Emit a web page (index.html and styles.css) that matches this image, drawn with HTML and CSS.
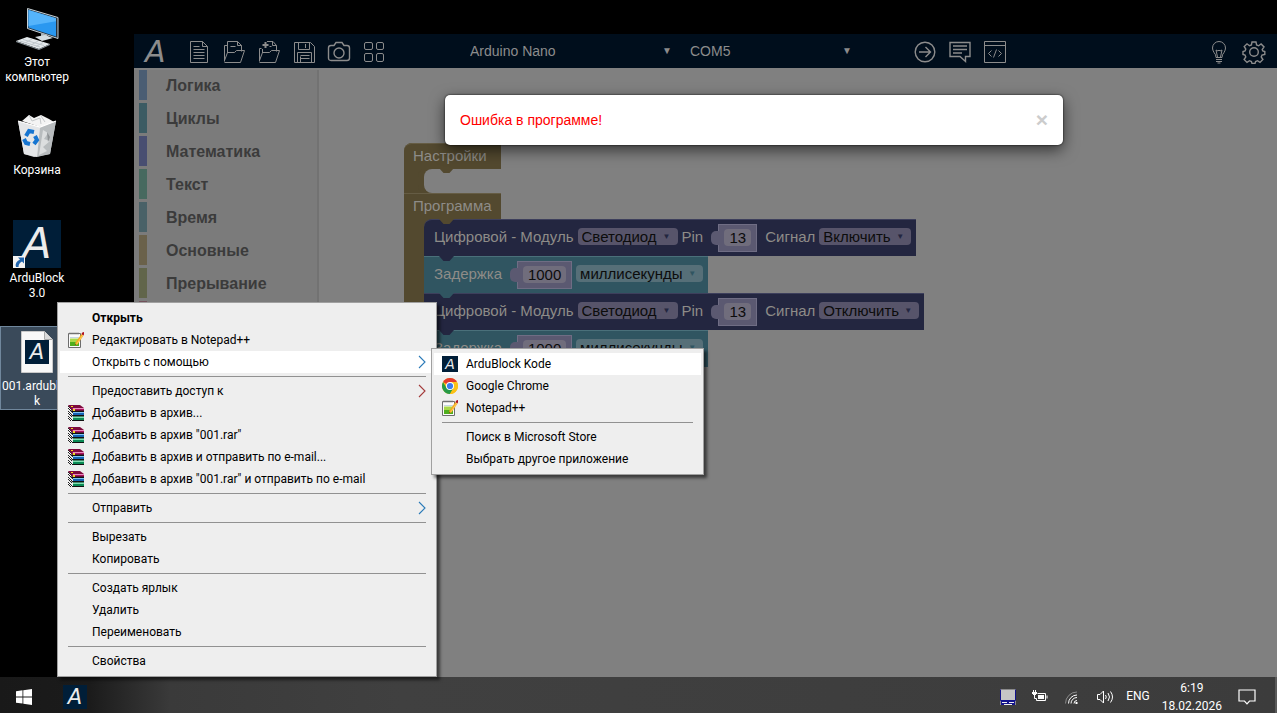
FILE: index.html
```html
<!DOCTYPE html>
<html lang="ru">
<head>
<meta charset="utf-8">
<title>ArduBlock 3.0</title>
<link rel="stylesheet" href="styles.css">
</head>
<body>
<svg class="defs" aria-hidden="true">
  <symbol id="rar" viewBox="0 0 16 16">
    <path d="M0 1l4 4v2L0 3zM0 6l4 4v2L0 8zM0 11l4 4v1H3l-3-3z" fill="#fff"/>
    <path d="M0 1l4 4M0 3l4 4M0 6l4 4M0 8l4 4M0 11l4 4M0 13l3 3" stroke="#222" stroke-width="1" fill="none"/>
    <path d="M0 0h12l4 3v2.500H4z" fill="#7d0a3c"/><path d="M4 3h12v3H5z" fill="#a8115c"/><path d="M5 3.500h11" stroke="#e98abf"/>
    <path d="M2 5.500L4.500 8H16V5.500z" fill="#111"/><path d="M5 7h11v3H5z" fill="#1464b4"/><path d="M5 7.500h11" stroke="#7fc4f5"/>
    <path d="M3 10l2 1.500h11V10z" fill="#111"/><path d="M5 11.500h11V15H5z" fill="#0a8a55"/><path d="M5 12.500h11" stroke="#7ee0b0"/>
    <path d="M4 15.500h12" stroke="#111"/><path d="M3 1h2v1H3zM5 4h2v2H5z" fill="#f2d81c"/>
  </symbol>
  <symbol id="npp" viewBox="0 0 16 16">
    <path d="M.5 1.500h12v14H.5z" fill="#fbfbfb" stroke="#6d6d6d"/>
    <path d="M2 6.500h9V14H2z" fill="#a9d94a"/><path d="M2 10h9v4H2z" fill="#4fae1d"/><path d="M2 5.500h9" stroke="#c6d5e2"/>
    <path d="M2 .5v2M4 .5v2M6 .5v2M8 .5v2M10 .5v2" stroke="#777"/>
    <path d="M13.500 2l2 1.500-6 9-2.500 1 .5-3z" fill="#f5a81c"/><path d="M13.500 2l1.300 1-6 9" stroke="#ffe07a" fill="none" stroke-width=".7"/>
    <path d="M13.500 2l.8-1.500L16 0v2.500l-.8 1z" fill="#b1121e"/><path d="M7 13.500l.4-1.500 1 .8z" fill="#333"/>
  </symbol>
  <symbol id="chrome" viewBox="0 0 16 16">
    <circle cx="8" cy="8" r="8" fill="#fbc116"/>
    <path d="M8 8L1.070 4A8 8 0 0 1 14.930 4z" fill="#e33b2e"/>
    <path d="M1.070 4A8 8 0 0 0 8 16l3.500-6L8 8 4.500 10z" fill="#269a48"/>
    <path d="M8 4h6.930A8 8 0 0 1 8 16l3.500-6z" fill="#fbc116"/>
    <circle cx="8" cy="8" r="4" fill="#fff"/><circle cx="8" cy="8" r="3.100" fill="#3b7ded"/>
  </symbol>
  <symbol id="chev" viewBox="0 0 8 14"><path d="M1 1l6 6-6 6" fill="none" stroke="currentColor" stroke-width="1.100"/></symbol>
</svg>

<main class="desktop">
  <nav class="shortcuts" aria-label="Рабочий стол">
    <button class="shortcut">
      <svg class="pic" viewBox="0 0 48 48" aria-hidden="true">
        <path d="M14.500 4.500L45 13.500v21l-30.500-10z" fill="#26323c" stroke="#c6d0d6" stroke-width="1"/>
        <path d="M15.500 6L43 14.300v18.200L15.500 23.500z" fill="#2a98f0"/><path d="M15.500 6L43 14.300v3L15.500 22z" fill="#55b4fb"/>
        <path d="M28 29l6 2v4l-6-2z" fill="#a8b2b8"/><path d="M22 33l10-2 8 3-11 3z" fill="#d5dde1"/>
        <path d="M3 37l11-4 23 7-11 5z" fill="#e4e9ec"/><path d="M7 37l20 6M10 35.500l21 6M12 39l7-4M18 41l7-4M23 42.500l7-4" stroke="#c0c8cd" fill="none"/>
        <path d="M3 37l23 8 11-5v1l-11 5-23-8z" fill="#8d979d"/>
      </svg>
      <span>Этот<br>компьютер</span>
    </button>
    <button class="shortcut">
      <svg class="pic" viewBox="0 0 48 48" aria-hidden="true">
        <path d="M5 9l22 6 16-6-6 33-16 3-10-3z" fill="#c9ccce"/><path d="M27 15l16-6-6 33-13 3z" fill="#b8bcbe"/>
        <path d="M5 9l22 6-3 30-13-3z" fill="#e4e6e8"/>
        <path d="M9 9l7-6 5 3 7-3 8 4 5 3-14 5z" fill="#f4f4f4"/><path d="M16 3l3 6 8-3 1 6M28 4l4 6" stroke="#c5c8ca" fill="none"/>
        <path d="M30 18l5 3-4 6 6 2-7 6 4 4-8 4z" fill="#dcdedf"/><path d="M34 20l3 5-2 5z" fill="#8d9194"/>
        <path d="M5 9l22 6 16-6" stroke="#fff" fill="none" stroke-width="1.200"/>
        <g fill="none" stroke="#1675d1" stroke-width="4"><path d="M13 24l3-5 5 1"/><path d="M22 24l2 4-3 4"/><path d="M17 32l-4-1-2-4"/></g>
      </svg>
      <span>Корзина</span>
    </button>
    <button class="shortcut">
      <span class="tile tile-lg">A
        <svg class="link-mark" viewBox="0 0 12 12" aria-hidden="true"><path d="M0 0h12v12H0z" fill="#f3f3f3"/><path d="M5 1.500h6v6L9 5.500Q5.500 7 5.500 11H3Q1.500 6 7 3.500z" fill="#2165ae"/></svg>
      </span>
      <span>ArduBlock<br>3.0</span>
    </button>
    <button class="shortcut selected">
      <span class="pic doc">
        <svg class="sheet" viewBox="0 0 32 42" aria-hidden="true"><path d="M.5.5h23l8 8v33H.5z" fill="#f8f8f8" stroke="#c9c9c9"/><path d="M23.500.5v8h8" fill="#dadada" stroke="#a8a8a8"/></svg>
        <span class="tile tile-md">A</span>
      </span>
      <span>001.ardubloc<br>k</span>
    </button>
  </nav>

  <section class="app">
    <header class="toolbar">
      <span class="logo">A</span>
      <div class="tools">
        <button class="tool" aria-label="Новый"><svg viewBox="0 0 24 24"><path d="M3.500 1.500h12l5 5v16h-17zM15.500 1.500v5h5M6.500 9.500h11M6.500 12.500h11M6.500 15.500h11M6.500 18.500h11M6.500 6.500h6"/></svg></button>
        <button class="tool" aria-label="Открыть"><svg viewBox="0 0 24 24"><path d="M2.500 21.500v-16h3M5.500 13V1.500h10l4 4v6M15.500 1.500v4h4M8.500 6.500h5M2.500 22.500h16l4-12h-8l-2 2h-7l-3 8"/></svg></button>
        <button class="tool" aria-label="Добавить"><svg viewBox="0 0 24 24"><path d="M2.500 21.500v-13h2M5.500 13V9M10 1.500h6l3.500 4v6M15.500 1.500v4h4M12.500 6.500h2M2.500 22.500h16l4-12h-8l-2 2h-7l-3 8"/><path d="M8.500 2v6M5.500 5h6" stroke-width="2"/></svg></button>
        <button class="tool" aria-label="Сохранить"><svg viewBox="0 0 24 24"><path d="M2.500 2.500h16l4 4v16h-20zM6.500 2.500v7h11v-7M13.500 4v4M5.500 22.500v-10h14v10M8.500 16.500v6M8.500 15.500h9M8.500 18.500h9"/></svg></button>
        <button class="tool" aria-label="Снимок"><svg viewBox="0 0 24 24" class="heavy"><path d="M1.500 8q0-2.500 2.500-2.500h3l2-3h6l2 3h3q2.500 0 2.500 2.500v10q0 2.500-2.500 2.500H4q-2.500 0-2.500-2.500z"/><circle cx="12" cy="13" r="5"/></svg></button>
        <button class="tool" aria-label="Блоки"><svg viewBox="0 0 24 24"><rect x="2.500" y="2.500" width="8" height="7" rx="1.500"/><rect x="14.500" y="2.500" width="7" height="7" rx="1.500"/><rect x="2.500" y="13.500" width="8" height="8" rx="1.500"/><rect x="14.500" y="13.500" width="7" height="8" rx="1.500"/></svg></button>
      </div>
      <div class="pickers">
        <label class="picker picker-board"><select aria-label="Плата"><option>Arduino Nano</option></select><span class="caret">▼</span></label>
        <label class="picker picker-port"><select aria-label="Порт"><option>COM5</option></select><span class="caret">▼</span></label>
      </div>
      <div class="tools">
        <button class="tool" aria-label="Загрузить"><svg viewBox="0 0 24 24" class="heavy"><circle cx="12" cy="12" r="9.800"/><path d="M6 12h11M12.500 7l5 5-5 5"/></svg></button>
        <button class="tool" aria-label="Монитор"><svg viewBox="0 0 24 24" class="heavy"><path d="M2 2.500h20v14h-4.500v5l-5.500-5H2zM5 6h14M5 9.500h14M5 13h9"/></svg></button>
        <button class="tool" aria-label="Код"><svg viewBox="0 0 24 24"><path d="M1.500 1.500h21v21h-21zM1.500 5.500h21M8.500 10.500l-3 3 3 3M15.500 10.500l3 3-3 3M13.500 9.500l-3 8"/></svg></button>
      </div>
      <div class="tools tools-end">
        <button class="tool" aria-label="Подсказка"><svg viewBox="0 0 24 24"><path d="M9 17.500q0-3-2-5Q5.500 10 5.500 8a6.500 6.500 0 0 1 13 0q0 2-1.500 4.500-2 2-2 5zM10.500 17L9 10l2 1 1-1 1 1 2-1-1.500 7M9 19.500h6M9 21.500h6M10.500 23h3"/></svg></button>
        <button class="tool" aria-label="Настройки"><svg viewBox="0 0 24 24" class="heavy"><circle cx="12" cy="12" r="4.300"/><path d="M10 2h4l.6 3 2 .8 2.500-1.800 2.900 2.900L20.200 9.500l.6 1.500 2 .5v3l-2.800.6-.8 1.900 1.700 2.500-2.900 2.900-2.500-1.700-1.900.8-.6 2h-3l-.6-2-1.900-.8-2.500 1.700-2.900-2.900 1.700-2.500-.8-1.900-2-.6v-3l2-.5.8-2L2.200 6.500 5 3.800l2.500 1.900L9.400 5z"/></svg></button>
      </div>
    </header>

    <div class="editor">
      <ul class="toolbox">
        <li class="cat c-logic">Логика</li>
        <li class="cat c-loops">Циклы</li>
        <li class="cat c-math">Математика</li>
        <li class="cat c-text">Текст</li>
        <li class="cat c-time">Время</li>
        <li class="cat c-main">Основные</li>
        <li class="cat c-int">Прерывание</li>
        <li class="cat c-more"></li>
      </ul>
      <div class="workspace">
        <div class="program">
          <div class="arm arm-top">Настройки</div>
          <div class="mouth"></div>
          <div class="arm">Программа</div>
          <div class="stack">
            <div class="block navy first">
              <span>Цифровой - Модуль</span>
              <label class="field"><select aria-label="Модуль"><option>Светодиод</option></select><span class="tick">▼</span></label>
              <span>Pin</span>
              <span class="value"><input class="n2" aria-label="Pin" value="13"></span>
              <span>Сигнал</span>
              <label class="field"><select aria-label="Сигнал"><option>Включить</option></select><span class="tick">▼</span></label>
            </div>
            <div class="block teal">
              <span>Задержка</span>
              <span class="value"><input class="n4" aria-label="Задержка" value="1000"></span>
              <label class="field"><select aria-label="Единицы"><option>миллисекунды</option></select><span class="tick">▼</span></label>
            </div>
            <div class="block navy">
              <span>Цифровой - Модуль</span>
              <label class="field"><select aria-label="Модуль"><option>Светодиод</option></select><span class="tick">▼</span></label>
              <span>Pin</span>
              <span class="value"><input class="n2" aria-label="Pin" value="13"></span>
              <span>Сигнал</span>
              <label class="field"><select aria-label="Сигнал"><option>Отключить</option></select><span class="tick">▼</span></label>
            </div>
            <div class="block teal">
              <span>Задержка</span>
              <span class="value"><input class="n4" aria-label="Задержка" value="1000"></span>
              <label class="field"><select aria-label="Единицы"><option>миллисекунды</option></select><span class="tick">▼</span></label>
            </div>
          </div>
        </div>
      </div>
    </div>

    <div class="alert" role="alertdialog" aria-label="Ошибка">
      <span>Ошибка в программе!</span>
      <button class="close" aria-label="Закрыть">×</button>
    </div>
  </section>

  <div class="menu menu-main" role="menu">
    <button class="item"><b>Открыть</b></button>
    <button class="item"><svg class="ico"><use href="#npp"/></svg>Редактировать в Notepad++</button>
    <button class="item active">Открыть с помощью<svg class="chev blue"><use href="#chev"/></svg></button>
    <hr>
    <button class="item">Предоставить доступ к<svg class="chev red"><use href="#chev"/></svg></button>
    <button class="item"><svg class="ico"><use href="#rar"/></svg>Добавить в архив...</button>
    <button class="item"><svg class="ico"><use href="#rar"/></svg>Добавить в архив "001.rar"</button>
    <button class="item"><svg class="ico"><use href="#rar"/></svg>Добавить в архив и отправить по e-mail...</button>
    <button class="item"><svg class="ico"><use href="#rar"/></svg>Добавить в архив "001.rar" и отправить по e-mail</button>
    <hr>
    <button class="item">Отправить<svg class="chev blue"><use href="#chev"/></svg></button>
    <hr>
    <button class="item">Вырезать</button>
    <button class="item">Копировать</button>
    <hr>
    <button class="item">Создать ярлык</button>
    <button class="item">Удалить</button>
    <button class="item">Переименовать</button>
    <hr>
    <button class="item">Свойства</button>
  </div>

  <div class="menu menu-sub" role="menu">
    <button class="item active"><span class="ico tile tile-sm">A</span>ArduBlock Kode</button>
    <button class="item"><svg class="ico"><use href="#chrome"/></svg>Google Chrome</button>
    <button class="item"><svg class="ico"><use href="#npp"/></svg>Notepad++</button>
    <hr>
    <button class="item">Поиск в Microsoft Store</button>
    <button class="item">Выбрать другое приложение</button>
  </div>
</main>

<footer class="taskbar">
  <button class="task" aria-label="Пуск"><svg width="16" height="16" viewBox="0 0 16 16" fill="#fff"><path d="M0 2.200L6.500 1.300v6.200H0zM7.300 1.200L16 0v7.500H7.300zM0 8.400h6.500v6.200L0 13.800zM7.300 8.400H16V16l-8.700-1.200z"/></svg></button>
  <button class="task" aria-label="ArduBlock"><span class="tile tile-md">A</span></button>
  <div class="tray">
    <svg width="16" height="16" viewBox="0 0 16 16" aria-hidden="true"><path d="M0 0h16v16H0z" fill="#8a8a8a"/><path d="M1 1h14v10H1z" fill="#c6c6c6"/><path d="M.5.500v11h15V.5" fill="none" stroke="#14148c"/><path d="M1 12h14v4H1z" fill="#14148c"/><path d="M2 13h5v1H2zM9 13h5v1H9zM4 15h8v1H4z" fill="#eee"/></svg>
    <svg width="16" height="16" viewBox="0 0 16 16" fill="none" stroke="#fff" aria-hidden="true"><path d="M5.500 4.500h8v7h-9v-2M15 6.500v3"/><path d="M6 6h6v4H6z" fill="#fff" stroke="none"/><path d="M1.500 1v2M3.500 1v2M2.500 5.500v4h2"/><path d="M0 3h5v2H4v1H1V5H0z" fill="#fff" stroke="none"/></svg>
    <svg width="16" height="16" viewBox="0 0 16 16" fill="none" stroke="#fff" aria-hidden="true"><path d="M10 14.500a3 3 0 0 1 3-3M7 14.500a6 6 0 0 1 6-6M4.500 14.500A8.500 8.500 0 0 1 13 6"/><path d="M1.500 14.500A11.500 11.500 0 0 1 13 3" opacity=".4"/><path d="M11.500 13h2v2h-2z" fill="#fff" stroke="none"/></svg>
    <svg width="18" height="16" viewBox="0 0 18 16" fill="none" stroke="#fff" aria-hidden="true"><path d="M1.500 5.500H4L7.500 2v12L4 10.500H1.500zM9.500 6q1.500 2 0 4M12 4q3 4 0 8M14.500 2.500q4 5.500 0 11"/></svg>
    <span class="lang">ENG</span>
    <time class="clock">6:19<br>18.02.2026</time>
    <svg width="18" height="16" viewBox="0 0 18 16" fill="none" stroke="#fff" stroke-width="1.200" aria-hidden="true"><path d="M1 1h16v11h-5.500L9 14.800 6.500 12H1z"/></svg>
  </div>
</footer>
</body>
</html>
```
FILE: styles.css
```css
* { box-sizing: border-box; }
body {
  margin: 0;
  min-height: 100vh;
  display: flex;
  flex-direction: column;
  background: #000;
  font: 12px/15px Roboto, "Noto Sans", sans-serif;
  color: #000;
}
button, select, input { font: inherit; color: inherit; border: 0; margin: 0; padding: 0; background: none; }
select { appearance: none; }
.defs { position: absolute; width: 0; height: 0; }

.desktop { position: relative; flex: 1; display: flex; }

/* Desktop shortcuts */
.shortcuts { width: 134px; flex: none; display: flex; flex-direction: column; gap: 24px; padding-top: 2px; }
.shortcut {
  width: 74px; height: 84px; flex: none;
  display: flex; flex-direction: column; align-items: center; gap: 3px; padding-top: 2px;
  color: #fff; text-align: center; white-space: nowrap;
}
.selected { background: #3a4a5a; outline: 1px solid #70879c; outline-offset: -1px; }
.pic { width: 48px; height: 48px; flex: none; }
.doc { display: grid; place-items: center; }
.sheet { width: 32px; height: 42px; grid-area: 1 / 1; }
.doc .tile { grid-area: 1 / 1; }

.tile {
  display: grid; place-items: center; flex: none;
  background: #001e38; color: #ececec;
  font-family: "DejaVu Sans", sans-serif; font-style: italic;
}
.tile-sm { font-size: 14px; line-height: 16px; }
.tile-md { width: 24px; height: 24px; font-size: 21px; line-height: 24px; }
.tile-lg { position: relative; width: 48px; height: 48px; font-size: 42px; line-height: 48px; }
.link-mark { position: absolute; left: 0; bottom: 0; width: 12px; height: 12px; }

/* Application */
.app { position: relative; flex: 1; margin-top: 34px; display: flex; flex-direction: column; background: #808080; font-family: "Liberation Sans", Arial, sans-serif; }
.toolbar { height: 34px; display: flex; align-items: center; background: #000e1c; color: #8c8c8c; }
.logo { width: 47px; padding: 2px 0 0 11px; font: italic 30px/34px "DejaVu Sans", sans-serif; }
.tools { display: flex; }
.tool { width: 35px; height: 34px; padding-top: 2px; display: grid; place-items: center; }
.tool svg { width: 24px; height: 24px; fill: none; stroke: #8c8c8c; stroke-width: 1; }
.tool svg.heavy { stroke-width: 1.4; }
.tools-end { margin-left: auto; padding-right: 6px; }
.pickers { display: flex; gap: 18px; padding: 0 55px 0 79px; }
.picker { display: grid; align-items: center; font-size: 14px; line-height: 20px; }
.picker select, .picker .caret { grid-area: 1 / 1; }
.picker-board { width: 202px; }
.picker-port { width: 162px; }
.caret { justify-self: end; font-size: 10px; pointer-events: none; }

.editor { flex: 1; display: flex; }
.toolbox {
  width: 185px; flex: none; margin: 2px 0 0; padding: 0 0 0 5px; list-style: none; overflow: hidden;
  background: #7b7b7b; border-right: 2px solid #727272;
}
.cat { height: 30px; margin-bottom: 3px; padding-left: 19px; border-left: 8px solid; font-weight: bold; font-size: 16px; line-height: 32px; color: #3b3b3b; }
.c-logic { border-left-color: #4a5d73; }
.c-loops { border-left-color: #3b5b63; }
.c-math { border-left-color: #484e71; }
.c-text { border-left-color: #47695f; }
.c-time { border-left-color: #496167; }
.c-main { border-left-color: #6a614a; }
.c-int { border-left-color: #61654a; }
.c-more { border-left-color: #73525c; }

.workspace { flex: 1; padding: 75px 0 0 85px; }
.program { width: max-content; padding-left: 20px; background: linear-gradient(#53492f, #53492f) left / 20px 100% no-repeat; border-radius: 8px 0 0; font-size: 15px; color: #8e8c88; }
.arm { width: 97px; height: 26px; margin-left: -20px; padding-left: 9px; line-height: 24px; background: #53492f; border-top: 1px solid #655c44; }
.arm-top { border-radius: 8px 0 0; }
.mouth { position: relative; width: 77px; height: 24px; border-radius: 8px 0 0 8px; background: #808080; box-shadow: -4px 0 0 2px #53492f; clip-path: inset(0 0 0 -6px); }
.mouth::before, .block::before {
  content: ""; position: absolute; left: 15px; top: -1px; width: 15px; height: 5px;
  clip-path: polygon(0 0, 100% 0, 70% 100%, 30% 100%); background: #53492f;
}
.stack { background: linear-gradient(#53492f, #53492f) left top / 8px 8px no-repeat; }
.block {
  position: relative; width: max-content; height: 37px;
  display: flex; align-items: center; gap: 4px; padding: 0 5px 4px 10px;
  --c: #232640; background: var(--c); border-top: 1px solid #3d3f5c;
}
.navy { --c: #232640; }
.teal { --c: #305561; border-top-color: #4a707a; }
.first { border-radius: 8px 0 0; }
.teal::before { background: #232640; }
.navy:not(.first)::before { background: #305561; }
.field { display: grid; align-items: center; height: 17px; border-radius: 4px; background: #57546a; color: #0c0c0c; }
.teal .field { background: #566f78; }
.field select, .field .tick { grid-area: 1 / 1; }
.field select { padding: 0 20px 0 4px; line-height: 17px; }
.tick { justify-self: end; padding-right: 7px; font-size: 8px; color: var(--c); pointer-events: none; }
.value { position: relative; height: 28px; display: flex; align-items: center; margin: 3px 4px 0 11px; padding: 0 5px; background: #5b5971; border: 1px solid #6f6d84; }
.teal .value { margin-right: 0; }
.value::before { content: ""; position: absolute; left: -8px; top: 6px; width: 8px; height: 14px; background: #5b5971; border-radius: 5px 0 0 5px; }
.value input { height: 17px; border-radius: 4px; background: #706d7c; color: #0c0c0c; text-align: center; }
.n2 { width: 27px; }
.n4 { width: 43px; }

.alert {
  position: absolute; left: 311px; top: 61px; width: 618px; max-width: calc(100% - 330px);
  display: flex; justify-content: space-between; align-items: center; padding: 15px;
  background: #fff; border-radius: 5px; box-shadow: 0 5px 15px rgba(0, 0, 0, .6), 0 0 2px #000;
  color: #f00; font-size: 14px; line-height: 20px;
}
.close { color: #ccc; font-weight: bold; font-size: 21px; line-height: 20px; }

/* Context menus */
.menu { position: absolute; padding: 4px 2px; background: #eee; border: 1px solid #a0a0a0; box-shadow: 3px 3px 3px rgba(0, 0, 0, .55); display: flex; flex-direction: column; }
.menu-main { left: 57px; top: 302px; width: 380px; }
.menu-sub { left: 431px; top: 348px; width: 273px; }
.item { position: relative; height: 22px; padding-left: 32px; text-align: left; line-height: 22px; white-space: nowrap; }
.active { background: #fff; }
.ico { position: absolute; left: 8px; top: 3px; width: 16px; height: 16px; }
.chev { position: absolute; right: 8px; top: 4px; width: 8px; height: 14px; }
.blue { color: #2a7ab8; }
.red { color: #a33a3a; }
.menu hr { width: auto; height: 1px; margin: 3px 8px; border: 0; background: #919191; align-self: stretch; }

/* Taskbar */
.taskbar { height: 36px; display: flex; background: linear-gradient(90deg, #191919 0, #1b1b1b 90px, #3a3a3a 170px, #404040 400px, #3c3c3c); color: #fff; }
.task { width: 48px; padding-top: 3px; display: grid; place-items: center; }
.task + .task { margin-left: 3px; }
.tray { margin-left: auto; display: flex; align-items: center; gap: 16px; padding: 3px 19px 0 0; border-right: 2px solid #5a5a5a; }
.tray > svg { flex: none; }
.lang { margin: 0 -4px 0 -4px; }
.clock { text-align: center; line-height: 18px; }
```
